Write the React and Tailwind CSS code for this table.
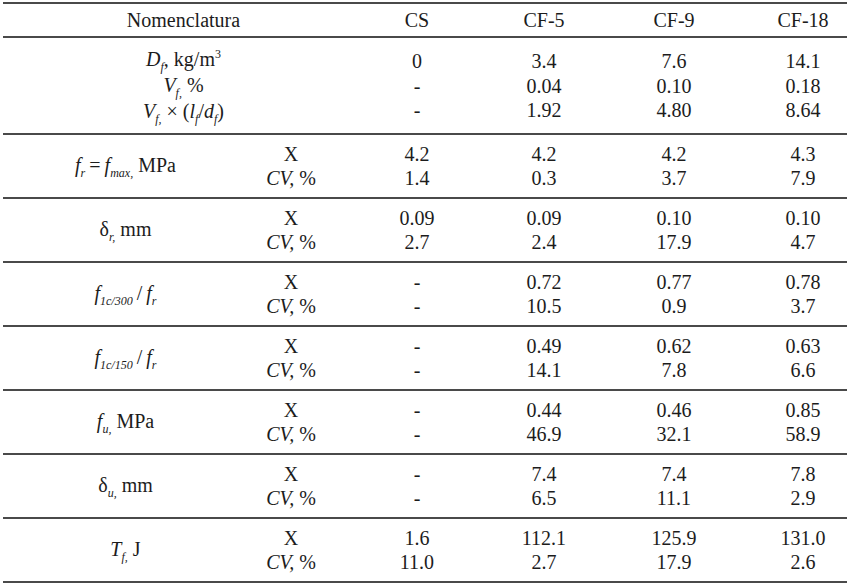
import React from 'react'

const Sub = ({ children }) => (
  <span className="align-[-5px] text-[12px] italic leading-none">{children}</span>
)
const Sup = ({ children }) => (
  <span className="align-[8px] text-[12px] leading-none">{children}</span>
)

const groups = [
  {
    label: <><i>f</i><Sub>r</Sub>{'\u2009'}={'\u2009'}<i>f</i><Sub>max,</Sub> MPa</>,
    x: ['4.2', '4.2', '4.2', '4.3'],
    cv: ['1.4', '0.3', '3.7', '7.9'],
  },
  {
    label: <>δ<Sub>r,</Sub> mm</>,
    x: ['0.09', '0.09', '0.10', '0.10'],
    cv: ['2.7', '2.4', '17.9', '4.7'],
  },
  {
    label: <><i>f</i><Sub>1c/300</Sub>{'\u2009'}/{'\u2009'}<i>f</i><Sub>r</Sub></>,
    x: ['-', '0.72', '0.77', '0.78'],
    cv: ['-', '10.5', '0.9', '3.7'],
  },
  {
    label: <><i>f</i><Sub>1c/150</Sub>{'\u2009'}/{'\u2009'}<i>f</i><Sub>r</Sub></>,
    x: ['-', '0.49', '0.62', '0.63'],
    cv: ['-', '14.1', '7.8', '6.6'],
  },
  {
    label: <><i>f</i><Sub>u,</Sub> MPa</>,
    x: ['-', '0.44', '0.46', '0.85'],
    cv: ['-', '46.9', '32.1', '58.9'],
  },
  {
    label: <>δ<Sub>u,</Sub> mm</>,
    x: ['-', '7.4', '7.4', '7.8'],
    cv: ['-', '6.5', '11.1', '2.9'],
  },
  {
    label: <><i>T</i><Sub>f,</Sub> J</>,
    x: ['1.6', '112.1', '125.9', '131.0'],
    cv: ['11.0', '2.7', '17.9', '2.6'],
  },
]

const dosage = [['0', '-', '-'], ['3.4', '0.04', '1.92'], ['7.6', '0.10', '4.80'], ['14.1', '0.18', '8.64']]

// same column template for every band of the table
const cols = 'grid grid-cols-[245px_86px_166px_88px_172px_86px] items-center border-b-2 border-[#4a4a4a]'

export default function App() {
  return (
    <div className="w-[850px] h-[585px] bg-white pt-[2px] px-[3px] text-[20px] text-[#1c1c1c] font-['Liberation_Serif',serif]">
      {/* Header */}
      <div className={`${cols} h-[36px] border-t-2`}>
        <div className="col-span-2 pl-[30px] text-center">Nomenclatura</div>
        {['CS', 'CF-5', 'CF-9', 'CF-18'].map(c => (
          <div key={c} className="text-center">{c}</div>
        ))}
      </div>

      {/* Fibre dosage */}
      <div className={`${cols} h-[97px] leading-[24.5px] pt-[1px]`}>
        <div className="col-span-2 pl-[30px] flex flex-col items-center">
          <div><i>D</i><Sub>f</Sub>, kg/m<Sup>3</Sup></div>
          <div><i>V</i><Sub>f,</Sub> %</div>
          <div><i>V</i><Sub>f,</Sub> × (<i>l</i><Sub>f</Sub>/<i>d</i><Sub>f</Sub>)</div>
        </div>
        {dosage.map((c, i) => (
          <div key={i} className="flex flex-col items-center">
            {c.map((v, j) => <div key={j}>{v}</div>)}
          </div>
        ))}
      </div>

      {groups.map((g, gi) => (
        <div key={gi} className={`${cols} h-[64px] leading-[24px]`}>
          <div className="text-center">{g.label}</div>
          <div className="flex flex-col items-center">
            <div>X</div>
            <div><i>CV,</i> %</div>
          </div>
          {g.x.map((v, i) => (
            <div key={i} className="flex flex-col items-center">
              <div>{v}</div>
              <div>{g.cv[i]}</div>
            </div>
          ))}
        </div>
      ))}
    </div>
  )
}
